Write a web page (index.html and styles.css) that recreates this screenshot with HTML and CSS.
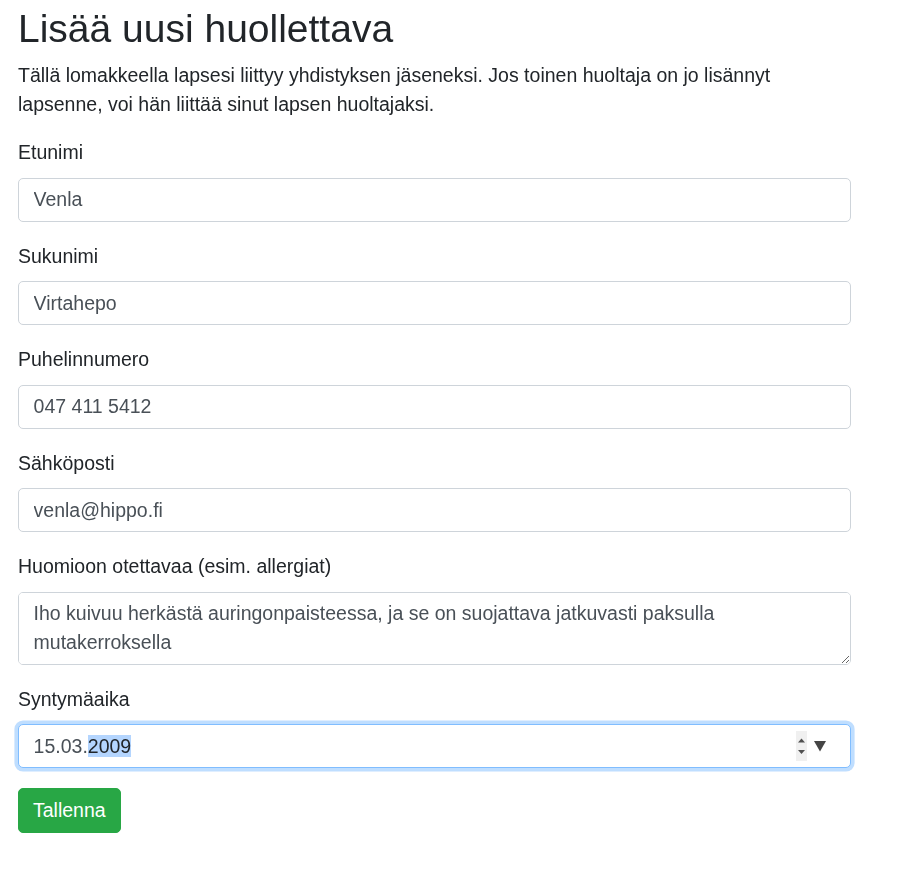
FILE: index.html
```html
<!DOCTYPE html>
<html lang="fi">
<head>
<meta charset="utf-8">
<title>Lisää uusi huollettava</title>
<link rel="stylesheet" href="styles.css">
</head>
<body>
<main class="page">
  <h1 class="title">Lisää uusi huollettava</h1>
  <p class="lead">Tällä lomakkeella lapsesi liittyy yhdistyksen jäseneksi. Jos toinen huoltaja on jo lisännyt lapsenne, voi hän liittää sinut lapsen huoltajaksi.</p>
  <form class="form">
    <div class="group">
      <label class="label" for="etunimi">Etunimi</label>
      <input class="control" id="etunimi" type="text" value="Venla">
    </div>
    <div class="group">
      <label class="label" for="sukunimi">Sukunimi</label>
      <input class="control" id="sukunimi" type="text" value="Virtahepo">
    </div>
    <div class="group">
      <label class="label" for="puhelin">Puhelinnumero</label>
      <input class="control" id="puhelin" type="text" value="047 411 5412">
    </div>
    <div class="group">
      <label class="label" for="email">Sähköposti</label>
      <input class="control" id="email" type="text" value="venla@hippo.fi">
    </div>
    <div class="group">
      <label class="label" for="huom">Huomioon otettavaa (esim. allergiat)</label>
      <textarea class="control area" id="huom" rows="2">Iho kuivuu herkästä auringonpaisteessa, ja se on suojattava jatkuvasti paksulla mutakerroksella</textarea>
    </div>
    <div class="group">
      <label class="label">Syntymäaika</label>
      <div class="control date focused">
        <span class="date-text">15.03.<span class="sel">2009</span></span>
        <span class="spin">
          <svg width="11" height="30" viewBox="0 0 11 30"><path d="M2 11.5 L5.5 7.5 L9 11.5 Z" fill="#505050"/><path d="M2 19 L5.5 23 L9 19 Z" fill="#505050"/></svg>
        </span>
        <span class="drop">
          <svg width="12" height="11" viewBox="0 0 12 11"><path d="M0 0 H12 L6 10.5 Z" fill="#454545"/></svg>
        </span>
      </div>
    </div>
    <button type="button" class="btn">Tallenna</button>
  </form>
</main>
</body>
</html>
```
FILE: styles.css
```css
html, body {
  margin: 0;
  padding: 0;
  background: #fff;
}
body {
  font-family: "Liberation Sans", Arial, sans-serif;
  font-size: 19.5px;
  line-height: 1.5;
  color: #212529;
}
.page {
  padding: 6px 18px 0 18px;
  width: 833px;
}
.title {
  font-size: 39px;
  font-weight: 400;
  line-height: 1.2;
  margin: 0 0 8px 0;
}
.lead {
  margin: 0 0 19px 0;
}
.group {
  margin-bottom: 20px;
}
.label {
  display: block;
  margin-bottom: 10px;
}
.control {
  display: block;
  box-sizing: border-box;
  width: 100%;
  height: 44.3px;
  padding: 6.5px 14.6px;
  font-family: "Liberation Sans", Arial, sans-serif;
  font-size: 19.5px;
  line-height: 1.5;
  color: #495057;
  background: #fff;
  border: 1px solid #ced4da;
  border-radius: 5px;
  margin: 0;
  outline: none;
}
.area {
  height: 73px;
  resize: vertical;
}
.date {
  display: flex;
  align-items: center;
}
.focused {
  border-color: #80bdff;
  box-shadow: 0 0 0 3.6px rgba(0, 123, 255, 0.25);
}
.date-text {
  flex: 1;
}
.sel {
  background: #b4d5fe;
  color: #212529;
}
.spin {
  display: flex;
  width: 11px;
  height: 30px;
  background: #f0f0f0;
  margin-right: 7px;
}
.drop {
  display: flex;
  width: 12px;
  height: 11px;
  margin-right: 9px;
  margin-top: 1px;
}
.btn {
  display: inline-block;
  font-family: "Liberation Sans", Arial, sans-serif;
  font-size: 19.5px;
  line-height: 1.5;
  color: #fff;
  background: #28a745;
  border: 1px solid #28a745;
  border-radius: 5px;
  padding: 6.9px 14px;
  cursor: pointer;
}
```
